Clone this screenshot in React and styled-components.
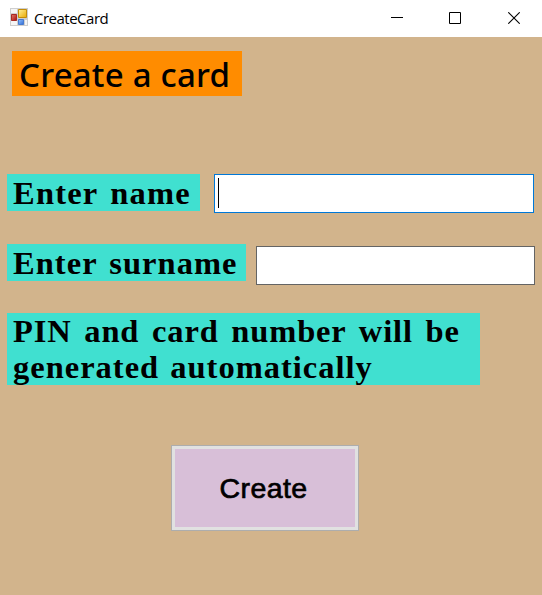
import React from "react";
import styled, { createGlobalStyle } from "styled-components";

const GlobalStyle = createGlobalStyle`
  * { box-sizing: border-box; }
  body { margin: 0; background: #d2b48c; overflow: hidden; }
`;

const Window = styled.div`
  width: 542px;
  height: 595px;
  background: #d2b48c;
  color: #000;
`;

const TitleBar = styled.header`
  display: flex;
  align-items: center;
  height: 37px;
  padding-left: 10px;
  background: #fff;
`;

const AppIcon = styled.svg`
  width: 18px;
  height: 18px;
  margin: 0 6px 3px 0;
  flex: none;
`;

const Caption = styled.span`
  flex: 1;
  padding-bottom: 2px;
  font: 15px/20px "Open Sans", "Noto Sans", sans-serif;
  letter-spacing: -0.5px;
`;

const WindowButton = styled.button`
  display: flex;
  align-items: center;
  justify-content: center;
  width: 58px;
  height: 37px;
  padding: 0 2px 1px 0;
  border: 0;
  background: none;
  &:last-child { width: 57px; padding: 0 0 1px; }
`;

const Form = styled.main`
  display: flex;
  flex-direction: column;
  align-items: flex-start;
  padding: 14px 7px 0;
`;

const Heading = styled.h1`
  width: 230px;
  height: 45px;
  margin: 0 0 78px 4.5px;
  padding-left: 7.5px;
  background: #ff8c00;
  font: 500 33px/47px "Noto Sans", sans-serif;
  letter-spacing: 0.2px;
  white-space: nowrap;
`;

const Row = styled.div`
  display: flex;
  align-items: flex-start;
  height: ${(p) => p.$height}px;
`;

const Label = styled.label`
  width: ${(p) => p.$width}px;
  height: 36.5px;
  margin-right: ${(p) => p.$gap}px;
  padding-left: 6px;
  background: #40e0d0;
  font: bold 32.5px/38px "Liberation Serif", serif;
  letter-spacing: ${(p) => p.$tracking}px;
  word-spacing: 3px;
  white-space: nowrap;
`;

const Notice = styled.p`
  width: 473px;
  height: 72px;
  margin: 0.4px 0 0.6px;
  padding-left: 6px;
  background: #40e0d0;
  font: bold 32.5px/36px "Liberation Serif", serif;
  white-space: nowrap;
`;

const Line = styled.span`
  display: block;
  letter-spacing: ${(p) => p.$tracking}px;
  word-spacing: ${(p) => p.$wordGap}px;
`;

const Field = styled.div`
  display: flex;
  width: ${(p) => p.$width}px;
  height: 39px;
  margin-top: ${(p) => p.$top || 0}px;
  padding: 3px;
  border: 1px solid ${(p) => (p.$active ? "#0078d7" : "#646464")};
  background: #fff;
`;

const Caret = styled.i`
  width: 1px;
  height: 30px;
  background: #000;
`;

const CreateButton = styled.button`
  width: 188px;
  height: 86px;
  margin: 59px 0 0 164px;
  padding: 0 3px 0 0;
  border: 1px solid #adadad;
  box-shadow: inset 0 0 0 3px #e1e1e1;
  background: #d8bfd8;
  color: #000;
  font: 28.5px/32px "Liberation Sans", sans-serif;
  letter-spacing: 0.4px;
  -webkit-text-stroke: 0.7px #000;
`;

export default function App() {
  return (
    <>
      <GlobalStyle />
      <Window>
        <TitleBar>
          <AppIcon viewBox="0 0 18 18">
            <defs>
              <linearGradient id="gold" x2="1" y2="1">
                <stop stopColor="#fff19b" />
                <stop offset="1" stopColor="#e9a900" />
              </linearGradient>
              <linearGradient id="red" x2="1" y2="1">
                <stop stopColor="#e77b68" />
                <stop offset="1" stopColor="#a61010" />
              </linearGradient>
              <linearGradient id="blue" x2="1" y2="1">
                <stop stopColor="#91c2ff" />
                <stop offset="1" stopColor="#316bd3" />
              </linearGradient>
            </defs>
            <path d="M0 0H18V18H0Z" fill="#cecece" />
            <path d="M1 1H7V5H1ZM1 13H7V17H1ZM15 12H17V17H15Z" fill="#f5f5f5" />
            <path d="M8.5 1.5H16.5V9.5H8.5Z" fill="url(#gold)" stroke="#c28c0a" />
            <path d="M1.5 6.5H6.5V12.5H1.5Z" fill="url(#red)" stroke="#a82a26" />
            <path d="M8.5 11.5H13.5V16.5H8.5Z" fill="url(#blue)" stroke="#477bd0" />
          </AppIcon>
          <Caption>CreateCard</Caption>
          <WindowButton aria-label="Minimize">
            <svg width="12" height="12"><path d="M0 5.5H12" stroke="#000" /></svg>
          </WindowButton>
          <WindowButton aria-label="Maximize">
            <svg width="12" height="12"><path d="M.5 .5H11.5V11.5H.5Z" fill="none" stroke="#000" /></svg>
          </WindowButton>
          <WindowButton aria-label="Close">
            <svg width="12" height="12"><path d="M.3 .3L11.7 11.7M11.7 .3L.3 11.7" stroke="#000" strokeWidth="1.1" /></svg>
          </WindowButton>
        </TitleBar>
        <Form>
          <Heading>Create a card</Heading>
          <Row $height={70}>
            <Label $width={193} $gap={14} $tracking={1.2}>Enter name</Label>
            <Field $width={320} $active><Caret /></Field>
          </Row>
          <Row $height={69}>
            <Label $width={239} $gap={10} $tracking={1.05}>Enter surname</Label>
            <Field $width={279} $top={2} />
          </Row>
          <Notice>
            <Line $tracking={0.85} $wordGap={3.8}>PIN and card number will be</Line>
            <Line $tracking={1} $wordGap={2}>generated automatically</Line>
          </Notice>
          <CreateButton>Create</CreateButton>
        </Form>
      </Window>
    </>
  );
}
